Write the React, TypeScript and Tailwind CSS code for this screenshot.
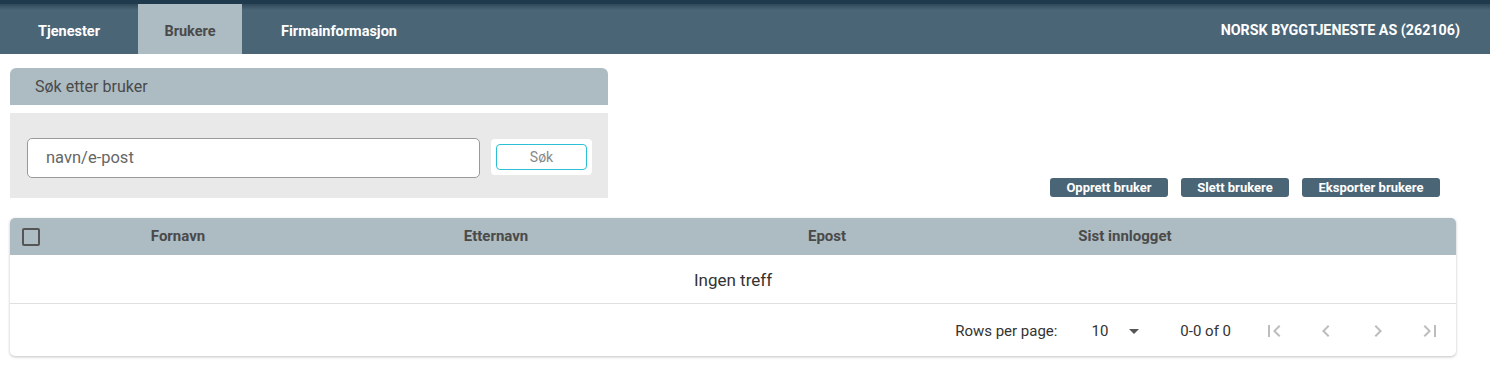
import React from "react";

const font = { fontFamily: "Roboto, 'Noto Sans', sans-serif" };

function ChevronFirst() {
  return (
    <svg width="24" height="24" viewBox="0 0 24 24" fill="currentColor">
      <path d="M18.41 16.59L13.82 12l4.59-4.59L17 6l-6 6 6 6zM6 6h2v12H6z" />
    </svg>
  );
}
function ChevronLeft() {
  return (
    <svg width="24" height="24" viewBox="0 0 24 24" fill="currentColor">
      <path d="M15.41 7.41L14 6l-6 6 6 6 1.41-1.41L10.83 12z" />
    </svg>
  );
}
function ChevronRight() {
  return (
    <svg width="24" height="24" viewBox="0 0 24 24" fill="currentColor">
      <path d="M10 6L8.59 7.41 13.17 12l-4.58 4.59L10 18l6-6z" />
    </svg>
  );
}
function ChevronLast() {
  return (
    <svg width="24" height="24" viewBox="0 0 24 24" fill="currentColor">
      <path d="M5.59 7.41L10.18 12l-4.59 4.59L7 18l6-6-6-6zM16 6h2v12h-2z" />
    </svg>
  );
}

export default function App() {
  return (
    <div style={font} className="w-[1490px] h-[388px] bg-white text-[#444]">
      {/* Top bar */}
      <div className="h-[4px] bg-[#1f3a4c]" />
      <div className="relative flex h-[50px] items-stretch bg-[#4a6576]">
        <div className="pointer-events-none absolute inset-x-0 top-0 h-[6px] bg-gradient-to-b from-[#2f4858] to-transparent" />
        <div className="flex w-[138px] items-end justify-center pb-[11px] text-[14.5px] font-bold text-white">
          Tjenester
        </div>
        <div className="relative flex w-[104px] items-end justify-center bg-[#adbbc2] pb-[11px] text-[14.5px] font-bold text-[#4a4a4a]">
          Brukere
        </div>
        <div className="flex w-[194px] items-end justify-center pb-[11px] text-[14.5px] font-bold text-white">
          Firmainformasjon
        </div>
        <div className="flex flex-1 items-end justify-end pb-[13px] pr-[30px] text-[14.3px] font-bold text-white">
          NORSK BYGGTJENESTE AS (262106)
        </div>
      </div>

      {/* Search + buttons row */}
      <div className="flex px-[10px] pt-[14px]">
        <div className="w-[598px]">
          <div className="flex h-[37px] items-center rounded-t-[6px] bg-[#adbbc2] pl-[25px] text-[16px] text-[#4a4a4a]">
            Søk etter bruker
          </div>
          <div className="mt-[8px] flex h-[85px] items-start bg-[#e9e9e9] pl-[17px] pt-[25px]">
            <div className="flex h-[40px] w-[453px] items-center rounded-[5px] border border-[#9a9a9a] bg-white pl-[18px] text-[16.5px] text-[#666]">
              navn/e-post
            </div>
            <div className="ml-[11px] mt-[1px] flex h-[36px] w-[101px] items-center justify-center rounded-[4px] bg-white">
              <div className="flex h-[26px] w-[91px] items-center justify-center rounded-[4px] border border-[#2bc0d6] text-[14px] text-[#888]">
                Søk
              </div>
            </div>
          </div>
        </div>
        <div className="flex flex-1 items-end justify-end gap-[13px] pb-[1px] pr-[40px]">
          <button className="h-[19px] w-[118px] rounded-[3px] bg-[#4a6576] text-[13px] font-bold text-white">
            Opprett bruker
          </button>
          <button className="h-[19px] w-[108px] rounded-[3px] bg-[#4a6576] text-[13px] font-bold text-white">
            Slett brukere
          </button>
          <button className="h-[19px] w-[138px] rounded-[3px] bg-[#4a6576] text-[13px] font-bold text-white">
            Eksporter brukere
          </button>
        </div>
      </div>

      {/* Table */}
      <div className="mx-[10px] mt-[20px] w-[1446px] rounded-[5px] bg-white shadow-[0_1px_3px_rgba(0,0,0,0.25)]">
        <div className="grid h-[37px] grid-cols-[48px_240px_396px_266px_330px_1fr] items-center rounded-t-[5px] bg-[#adbbc2] text-[15px] font-bold text-[#4a4a4a]">
          <div className="flex justify-end pr-[18px]">
            <div className="h-[18px] w-[18px] rounded-[2px] border-2 border-[#555]" />
          </div>
          <div className="text-center">Fornavn</div>
          <div className="text-center">Etternavn</div>
          <div className="text-center">Epost</div>
          <div className="text-center">Sist innlogget</div>
          <div />
        </div>
        <div className="flex h-[49px] items-center justify-center border-b border-[#e0e0e0] pt-[3px] text-[17px] text-[#333]">
          Ingen treff
        </div>
        <div className="flex h-[52px] items-center justify-end pr-[14px] pt-[2px] text-[15px] text-[#333]">
          <span>Rows per page:</span>
          <span className="ml-[34px]">10</span>
          <svg className="ml-[21px]" width="10" height="5" viewBox="0 0 10 5" fill="#555">
            <path d="M0 0l5 5 5-5z" />
          </svg>
          <span className="ml-[41px]">0-0 of 0</span>
          <div className="ml-[31px] flex items-center gap-[28px] text-[#bdbdbd]">
            <ChevronFirst />
            <ChevronLeft />
            <ChevronRight />
            <ChevronLast />
          </div>
        </div>
      </div>
    </div>
  );
}
